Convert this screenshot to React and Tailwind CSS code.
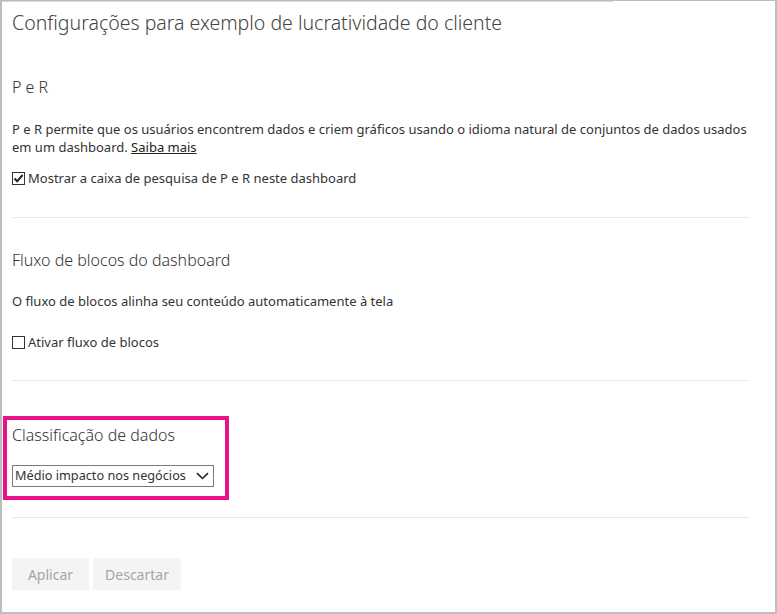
import React, { useState } from 'react';

const Checkbox = ({ checked, onChange }) => (
  <span
    onClick={onChange}
    className="inline-flex items-center justify-center w-[13px] h-[13px] border border-[#333] bg-white mr-[3px] cursor-pointer shrink-0"
  >
    {checked && (
      <svg width="11" height="11" viewBox="0 0 11 11">
        <path d="M1.5 5.5 L4.2 8.3 L9.6 2" fill="none" stroke="#222" strokeWidth="2" />
      </svg>
    )}
  </span>
);

const Divider = () => <div className="h-px bg-[#e6e6e6] mr-[26px]" />;

const App = () => {
  const [qna, setQna] = useState(true);
  const [flow, setFlow] = useState(false);

  return (
    <div
      className="w-[777px] h-[614px] bg-white text-[#333] border-l-2 border-r-2 border-t border-b-2 border-[#bdbdbd] overflow-hidden"
      style={{ fontFamily: '"Noto Sans", "Open Sans", sans-serif' }}
    >
      <div className="h-px bg-[#d9d9d9] w-[611px]" />
      <div className="pl-[10px]">
        <h1 className="text-[19.5px] font-light text-[#444] leading-[26px] mt-[8px]">
          Configurações para exemplo de lucratividade do cliente
        </h1>

        <h2 className="text-[16px] font-light text-[#333] leading-[22px] mt-[40px]">P e R</h2>
        <div className="text-[13px] leading-[18px] mt-[22px]">
          <p>
            P e R permite que os usuários encontrem dados e criem gráficos usando o idioma natural de conjuntos de dados usados
          </p>
          <p>
            em um dashboard. <a className="underline text-[#222] cursor-pointer">Saiba mais</a>
          </p>
        </div>
        <label className="flex items-center text-[13px] leading-[16px] mt-[14px]">
          <Checkbox checked={qna} onChange={() => setQna(!qna)} />
          Mostrar a caixa de pesquisa de P e R neste dashboard
        </label>

        <div className="mt-[31px]">
          <Divider />
        </div>

        <h2 className="text-[16px] font-light text-[#333] leading-[22px] mt-[31px]">
          Fluxo de blocos do dashboard
        </h2>
        <p className="text-[13px] leading-[16px] mt-[22px]">
          O fluxo de blocos alinha seu conteúdo automaticamente à tela
        </p>
        <label className="flex items-center text-[13px] leading-[16px] mt-[25px]">
          <Checkbox checked={flow} onChange={() => setFlow(!flow)} />
          Ativar fluxo de blocos
        </label>

        <div className="mt-[30px]">
          <Divider />
        </div>

        <div className="ml-[-9px] mt-[35px] w-[226px] border-[4px] border-[#e8118a] pl-[5px] pt-[4px] pb-[9px]">
          <h2 className="text-[16px] font-light text-[#333] leading-[22px]">Classificação de dados</h2>
          <div className="mt-[19px] w-[202px] h-[22px] border border-[#7a7a7a] flex items-center justify-between pl-[2px] pr-[4px] text-[12.7px]">
            <span>Médio impacto nos negócios</span>
            <svg width="13" height="8" viewBox="0 0 13 8">
              <path d="M1 1.2 L6.5 6.5 L12 1.2" fill="none" stroke="#222" strokeWidth="1.6" />
            </svg>
          </div>
        </div>

        <div className="mt-[17px]">
          <Divider />
        </div>

        <div className="flex gap-[4px] mt-[40px]">
          <button className="w-[77px] h-[32px] bg-[#f4f4f4] text-[#a6a6a6] text-[14px]">Aplicar</button>
          <button className="w-[88px] h-[32px] bg-[#f4f4f4] text-[#a6a6a6] text-[14px]">Descartar</button>
        </div>
      </div>
    </div>
  );
};

export default App;
